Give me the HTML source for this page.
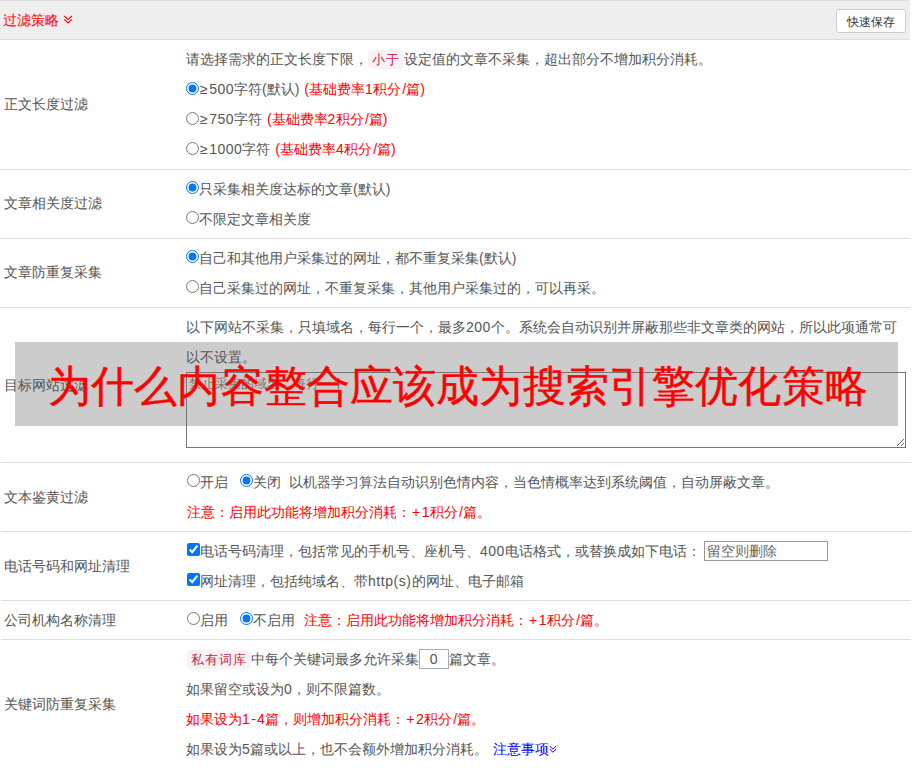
<!DOCTYPE html>
<html><head><meta charset="utf-8">
<style>
*{box-sizing:border-box}
html,body{margin:0;padding:0;background:#fff}
body{width:912px;height:768px;overflow:hidden;position:relative;font-family:"Liberation Sans",sans-serif;font-size:14px;color:#555;word-spacing:1px}
.hdr{position:absolute;left:0;top:0;width:910px;height:40px;background:#eee;border-top:1px solid #ddd;border-bottom:1px solid #ddd}
.hdr .t{position:absolute;left:3px;top:9px;line-height:20px;color:#f00;font-size:14px}
.chev{position:absolute;left:63px;top:14px}
.btn{position:absolute;left:836px;top:8px;width:70px;height:24px;border:1px solid #ccc;border-radius:3px;background:#fff;color:#333;font-size:12px;line-height:24px;text-align:center;word-spacing:0}
.row{position:absolute;left:0;width:910px;border-bottom:1px solid #ddd}
.row.s{border-bottom:0}
.row.s::after{content:"";position:absolute;left:1px;width:910px;bottom:0;height:1px;background:#ddd}
.lab{position:absolute;left:4px;top:0;bottom:0;display:flex;align-items:center}
.cnt{position:absolute;left:186px;top:4px;right:0}
.ln{height:30px;line-height:30px;white-space:nowrap}
.red{color:#f00}
.blue{color:#00f}
input[type=radio],input[type=checkbox]{margin:0;width:13px;height:13px;vertical-align:0px}
.r1 input{vertical-align:-1px}
i{font-style:normal}
.ge{margin-left:1px;margin-right:1.5px}
.pl{margin-left:1px;margin-right:1.5px}
.sl{margin-left:1px}
.d{letter-spacing:0.5px}
.hy{margin:0 1px}
code{font-family:"Liberation Sans",sans-serif;background:#f9f2f4;color:#c7254e;padding:2px 4px;border-radius:4px;font-size:13px;letter-spacing:1px;word-spacing:0}
textarea{position:absolute;left:0;top:60px;width:720px;height:76px;margin:0;border:1px solid #767676;background:transparent;line-height:18px;padding:2px 2px;font-family:"Liberation Sans",sans-serif;font-size:13px;resize:vertical;outline:none}
textarea::placeholder{color:#757575}
.inp{display:inline-block;border:1px solid #999;height:20px;line-height:18px;vertical-align:middle;padding:0 3px;color:#757575;word-spacing:0}
.ovl{position:absolute;left:15px;top:342px;width:883px;height:84px;background:#ccc}
.ttl{-webkit-text-stroke:0.4px #f00;position:absolute;left:48px;top:356px;font-size:43px;letter-spacing:0.15px;line-height:60px;color:#f00;white-space:nowrap;word-spacing:0}
</style></head><body>
<div class="ovl"></div>
<div class="hdr"><span class="t">过滤策略</span><svg class="chev" width="10" height="10" viewBox="0 0 10 10"><path d="M1.3 1L5.1 4.6L8.9 1M1.3 4.4L5.1 8L8.9 4.4" fill="none" stroke="#f00" stroke-width="1.1"/></svg><div class="btn">快速保存</div></div>

<div class="row r1" style="top:40px;height:130px">
 <div class="lab">正文长度过滤</div>
 <div class="cnt">
  <div class="ln">请选择需求的正文长度下限，<code>小于</code>设定值的文章不采集，超出部分不增加积分消耗。</div>
  <div class="ln"><input type="radio" checked><i class="ge">≥</i><i class="d">500</i>字符(默认) <span class="red">(基础费率<i class="d">1</i>积分<i class="sl">/</i>篇)</span></div>
  <div class="ln"><input type="radio"><i class="ge">≥</i><i class="d">750</i>字符 <span class="red">(基础费率<i class="d">2</i>积分<i class="sl">/</i>篇)</span></div>
  <div class="ln"><input type="radio"><i class="ge">≥</i><i class="d">1000</i>字符 <span class="red">(基础费率<i class="d">4</i>积分<i class="sl">/</i>篇)</span></div>
 </div>
</div>

<div class="row" style="top:170px;height:69px">
 <div class="lab">文章相关度过滤</div>
 <div class="cnt">
  <div class="ln"><input type="radio" checked>只采集相关度达标的文章(默认)</div>
  <div class="ln"><input type="radio">不限定文章相关度</div>
 </div>
</div>

<div class="row" style="top:239px;height:69px">
 <div class="lab">文章防重复采集</div>
 <div class="cnt">
  <div class="ln"><input type="radio" checked>自己和其他用户采集过的网址，都不重复采集(默认)</div>
  <div class="ln"><input type="radio">自己采集过的网址，不重复采集，其他用户采集过的，可以再采。</div>
 </div>
</div>

<div class="row s" style="top:308px;height:155px">
 <div class="lab">目标网站过滤</div>
 <div class="cnt">
  <div class="ln">以下网站不采集，只填域名，每行一个，最多<i class="d">200</i>个。系统会自动识别并屏蔽那些非文章类的网站，所以此项通常可</div>
  <div class="ln">以不设置。</div>
  <textarea placeholder="禁止采集的域名，每行一个"></textarea>
 </div>
</div>

<div class="row s" style="top:463px;height:69px">
 <div class="lab">文本鉴黄过滤</div>
 <div class="cnt">
  <div class="ln"><input type="radio" style="margin-left:1px">开启<input type="radio" checked style="margin-left:12px">关闭<span style="margin-left:8px">以机器学习算法自动识别色情内容，当色情概率达到系统阈值，自动屏蔽文章。</span></div>
  <div class="ln red" style="padding-left:1px">注意：启用此功能将增加积分消耗：<i class="pl">+</i><i class="d">1</i>积分<i class="sl">/</i>篇。</div>
 </div>
</div>

<div class="row s" style="top:532px;height:69px">
 <div class="lab">电话号码和网址清理</div>
 <div class="cnt">
  <div class="ln"><input type="checkbox" checked style="margin-left:1px">电话号码清理，包括常见的手机号、座机号、<i class="d">400</i>电话格式，或替换成如下电话：<span class="inp" style="margin-left:3px;width:124px;position:relative;top:-1px;padding-left:2px;color:#666">留空则删除</span></div>
  <div class="ln"><input type="checkbox" checked style="margin-left:1px">网址清理，包括纯域名、带<i style="letter-spacing:0.55px">http(s)</i>的网址、电子邮箱</div>
 </div>
</div>

<div class="row s" style="top:601px;height:39px">
 <div class="lab">公司机构名称清理</div>
 <div class="cnt">
  <div class="ln"><input type="radio" style="margin-left:1px">启用<input type="radio" checked style="margin-left:12px">不启用<span class="red" style="margin-left:9px">注意：启用此功能将增加积分消耗：<i class="pl">+</i><i class="d">1</i>积分<i class="sl">/</i>篇。</span></div>
 </div>
</div>

<div class="row" style="top:640px;height:129px;border-bottom:0">
 <div class="lab">关键词防重复采集</div>
 <div class="cnt">
  <div class="ln"><code style="margin-left:1px">私有词库</code>中每个关键词最多允许采集<span class="inp" style="width:30px;text-align:center;color:#555;border-color:#aaa;position:relative;top:-1px"><i class="d">0</i></span>篇文章。</div>
  <div class="ln">如果留空或设为<i class="d">0</i>，则不限篇数。</div>
  <div class="ln red">如果设为<i class="d">1</i><i class="hy">-</i><i class="d">4</i>篇，则增加积分消耗：<i class="pl">+</i><i class="d">2</i>积分<i class="sl">/</i>篇。</div>
  <div class="ln">如果设为<i class="d">5</i>篇或以上，也不会额外增加积分消耗。 <span class="blue">注意事项<svg width="8" height="8" viewBox="0 0 8 8" style="vertical-align:1px"><path d="M0.7 1.1L3.9 4.1L7.1 1.1M0.7 4.2L3.9 7.2L7.1 4.2" fill="none" stroke="#00f" stroke-width="1"/></svg></span></div>
 </div>
</div>

<div class="ttl">为什么内容整合应该成为搜索引擎优化策略</div>
</body></html>
